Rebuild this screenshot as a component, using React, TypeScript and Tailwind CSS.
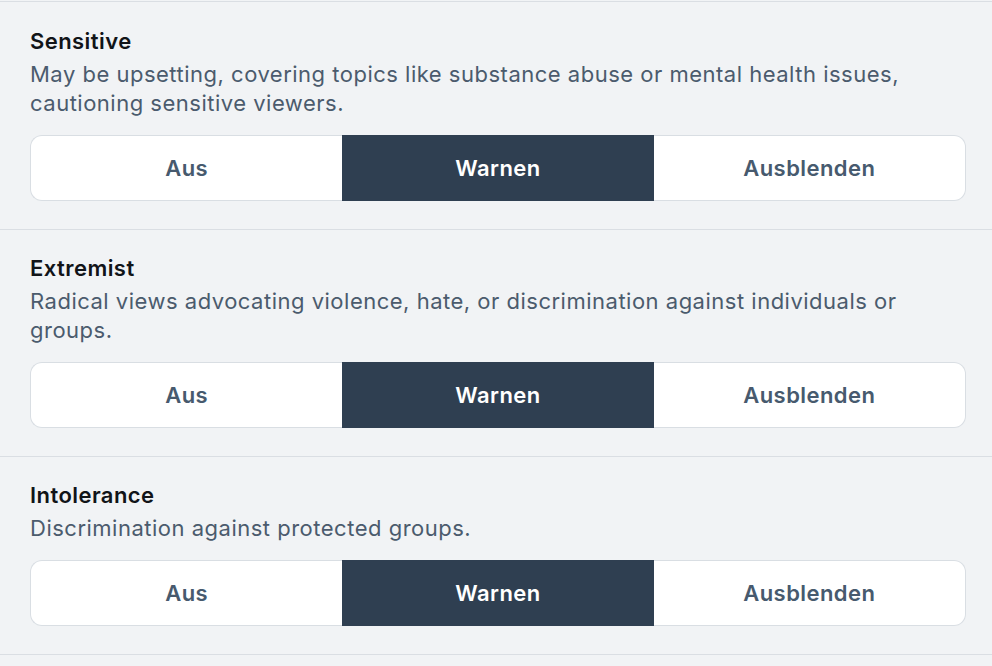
import React, { useState } from 'react';

type Level = 'off' | 'warn' | 'hide';

interface Category {
    id: string;
    title: string;
    description: string;
    level: Level;
}

const initialData: Category[] = [
    {
        id: 'sensitive',
        title: 'Sensitive',
        description:
            'May be upsetting, covering topics like substance abuse or mental health issues, cautioning sensitive viewers.',
        level: 'warn',
    },
    {
        id: 'extremist',
        title: 'Extremist',
        description: 'Radical views advocating violence, hate, or discrimination against individuals or groups.',
        level: 'warn',
    },
    {
        id: 'intolerance',
        title: 'Intolerance',
        description: 'Discrimination against protected groups.',
        level: 'warn',
    },
];

const options: { value: Level; label: string }[] = [
    { value: 'off', label: 'Aus' },
    { value: 'warn', label: 'Warnen' },
    { value: 'hide', label: 'Ausblenden' },
];

const SegmentedControl: React.FC<{ value: Level; onChange: (v: Level) => void }> = ({ value, onChange }) => (
    <div className="flex mt-[17px]">
        {options.map((opt, i) => {
            const active = opt.value === value;
            const first = i === 0;
            const last = i === options.length - 1;
            return (
                <button
                    key={opt.value}
                    onClick={() => onChange(opt.value)}
                    className={[
                        'flex-1 h-[66px] border-y text-[22px] font-semibold tracking-[0.02em]',
                        first ? 'border-l rounded-l-[12px]' : '',
                        last ? 'border-r rounded-r-[12px]' : '',
                        active
                            ? 'bg-[#2f3f51] border-[#2f3f51] text-white'
                            : 'bg-white border-[#d9dee3] text-[#475a6e]',
                    ].join(' ')}
                >
                    {opt.label}
                </button>
            );
        })}
    </div>
);

export default function App() {
    const [data, setData] = useState<Category[]>(initialData);

    const setLevel = (id: string, level: Level) =>
        setData(data.map((c) => (c.id === id ? { ...c, level } : c)));

    return (
        <div className="min-h-screen bg-[#f1f3f5] pt-px font-['Inter',sans-serif]">
            {data.map((cat) => (
                <section
                    key={cat.id}
                    className="border-t border-[#dadee3] pl-[30px] pr-[26px] pt-[24px] pb-[28px] first:pt-[25px] last:border-b"
                >
                    <h3 className="text-[22px] leading-[29px] font-semibold tracking-[0.02em] text-[#111418]">{cat.title}</h3>
                    <p className="mt-[4px] text-[22px] leading-[29px] tracking-[0.5px] text-[#4b5b6d]">{cat.description}</p>
                    <SegmentedControl value={cat.level} onChange={(v) => setLevel(cat.id, v)} />
                </section>
            ))}
        </div>
    );
}
